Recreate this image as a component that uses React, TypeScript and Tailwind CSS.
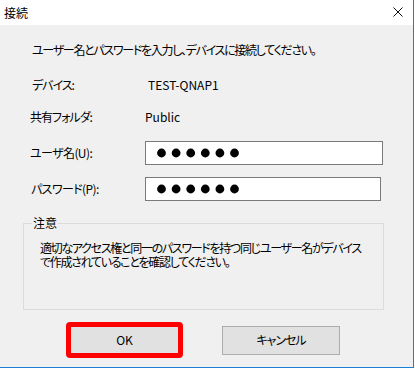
import React from "react";

const font = {
  fontFamily: '"Noto Sans CJK JP", "Noto Sans", sans-serif',
};

function Dots() {
  return (
    <svg width="84" height="10" viewBox="0 0 84 10">
      {[0, 1, 2, 3, 4, 5].map((i) => (
        <circle key={i} cx={4.5 + i * 14.6} cy={5} r={4.4} fill="#000" />
      ))}
    </svg>
  );
}

export default function App() {
  return (
    <div className="w-[415px] h-[368px] bg-white text-[12px] text-black" style={font}>
      <div className="w-[414px] h-[368px] flex flex-col border-r border-b border-[#1a7fd4]">
        <div className="h-[25px] bg-white flex items-center justify-between pl-[4px] pr-[10px] shrink-0">
          <span className="leading-[16px] [font-feature-settings:'palt']">接続</span>
          <svg width="10" height="10" viewBox="0 0 10 10" className="mt-[-1px]">
            <path d="M0.5 0.5 L9.5 9.5 M9.5 0.5 L0.5 9.5" stroke="#111" strokeWidth="1" />
          </svg>
        </div>
        <div className="flex-1 bg-[#f0f0f0] flex flex-col [font-feature-settings:'palt']">
          <p className="mt-[17px] ml-[32px] leading-[16px] tracking-[-1.3px] whitespace-nowrap">
            ユーザー名とパスワードを入力し、デバイスに接続してください。
          </p>
          <div className="mt-[19px] flex items-center h-[16px] leading-[16px]">
            <span className="ml-[32px] w-[116px] tracking-[-1px]">デバイス:</span>
            <span>TEST-QNAP1</span>
          </div>
          <div className="mt-[16px] flex items-center h-[16px] leading-[16px]">
            <span className="ml-[30px] w-[115px] tracking-[-1px]">共有フォルダ:</span>
            <span>Public</span>
          </div>
          <div className="mt-[16px] flex items-center h-[24px]">
            <span className="ml-[30px] w-[115px] leading-[16px] tracking-[-0.6px]">ユーザ名(U):</span>
            <div className="w-[238px] h-[24px] bg-white border border-[#7a7a7a] flex items-center pl-[11px] pb-[1px]">
              <Dots />
            </div>
          </div>
          <div className="mt-[12px] flex items-center h-[24px]">
            <span className="ml-[31px] w-[114px] leading-[16px] tracking-[-0.6px]">パスワード(P):</span>
            <div className="w-[236px] h-[24px] bg-white border border-[#7a7a7a] flex items-center pl-[11px] pb-[1px]">
              <Dots />
            </div>
          </div>
          <fieldset className="mt-[14px] ml-[23px] w-[361px] h-[95px] border border-[#dcdcdc] pl-[16px]">
            <legend className="ml-[-8px] px-[1px] leading-[16px]">注意</legend>
            <p className="mt-[10px] leading-[14px] tracking-[-1.3px] whitespace-nowrap">
              適切なアクセス権と同一のパスワードを持つ同じユーザー名がデバイス
              <br />
              で作成されていることを確認してください。
            </p>
          </fieldset>
          <div className="mt-[12px] flex items-center h-[36px] pl-[66px] gap-[39px]">
            <div className="w-[117px] h-[36px] border-[5px] border-[#ff0000] rounded-[4px] bg-[#e1e1e1] flex items-center justify-center">
              <span className="leading-[16px]">OK</span>
            </div>
            <div className="w-[118px] h-[29px] border border-[#adadad] bg-[#e1e1e1] flex items-center justify-center">
              <span className="leading-[16px] tracking-[-1px]">キャンセル</span>
            </div>
          </div>
        </div>
      </div>
    </div>
  );
}
